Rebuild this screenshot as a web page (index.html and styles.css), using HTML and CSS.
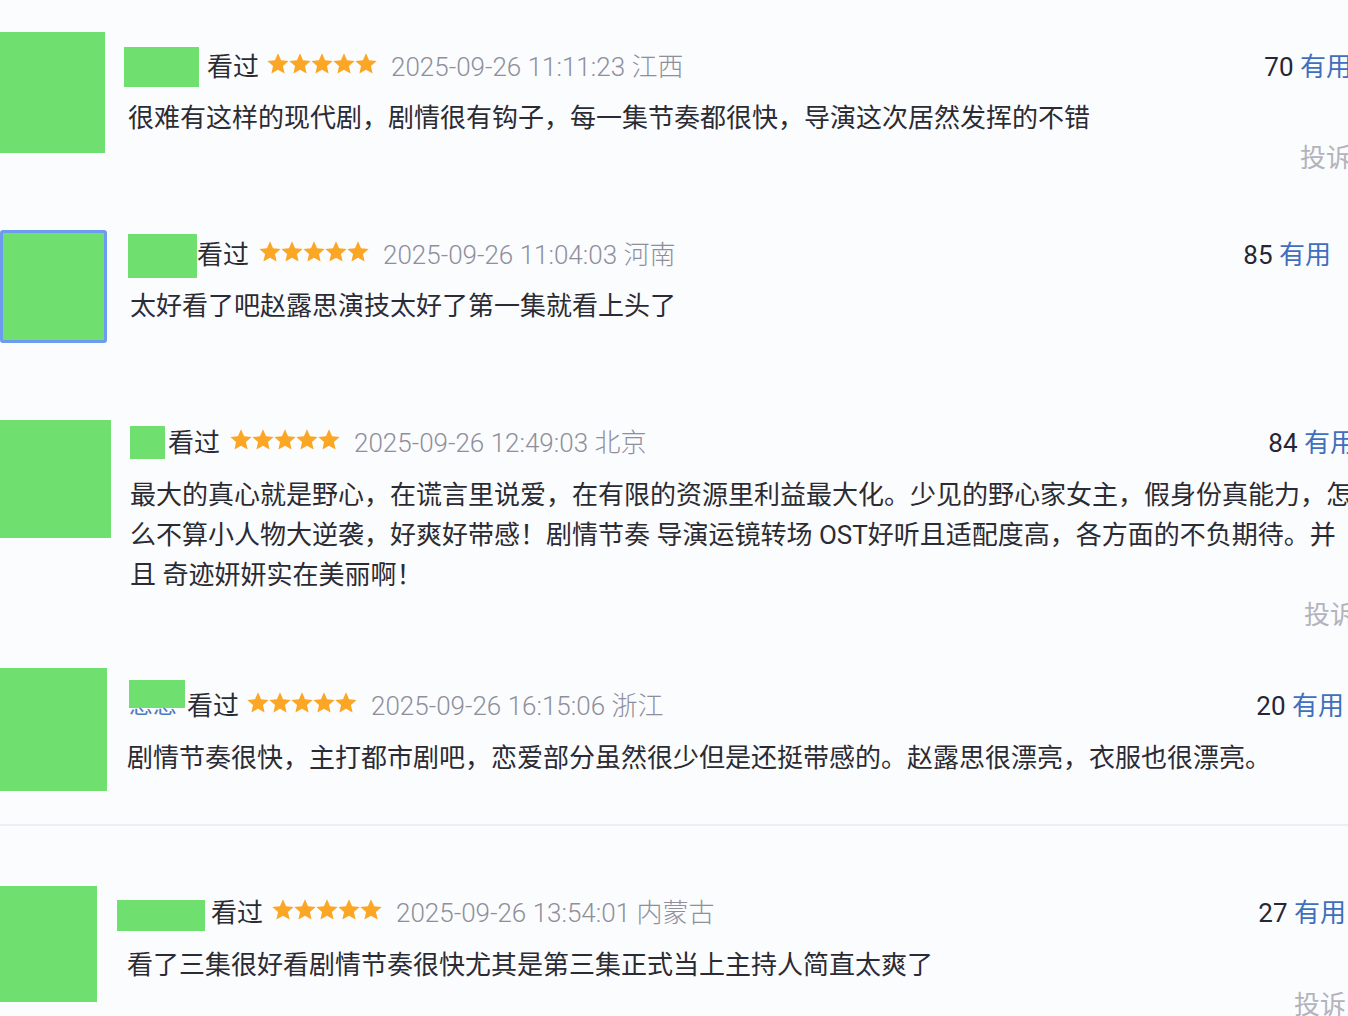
FILE: index.html
```html
<!doctype html>
<html lang="zh-CN">
  <head>
    <meta charset="UTF-8" />
    <meta name="viewport" content="width=device-width, initial-scale=1.0" />
    <title>短评</title>
    <link rel="stylesheet" href="styles.css">
  </head>
  <body>
    <svg class="sprite" aria-hidden="true">
      <defs>
        <symbol id="star" viewBox="0 0 22 22">
          <polygon points="11,0.3 14.06,7.29 21.65,8.04 15.95,13.11 17.59,20.56 11,16.7 4.41,20.56 6.05,13.11 0.35,8.04 7.94,7.29" />
        </symbol>
      </defs>
    </svg>

    <main class="review-list">
      <article class="review review--1">
        <div class="avatar"></div>
        <div class="review-body">
          <div class="review-head">
            <span class="user"></span>
            <span class="status">看过</span>
            <svg class="stars" viewBox="0 0 110 22"><use href="#star" x="0" width="22" height="22" /><use href="#star" x="22" width="22" height="22" /><use href="#star" x="44" width="22" height="22" /><use href="#star" x="66" width="22" height="22" /><use href="#star" x="88" width="22" height="22" /></svg>
            <span class="review-time">2025-09-26 11:11:23 江西</span>
            <span class="votes"><span class="vote-count">70</span> <a class="vote-link">有用</a></span>
          </div>
          <p class="review-text">很难有这样的现代剧，剧情很有钩子，每一集节奏都很快，导演这次居然发挥的不错</p>
          <div class="review-foot"><a class="report">投诉</a></div>
        </div>
      </article>

      <article class="review review--2">
        <div class="avatar avatar--focused"></div>
        <div class="review-body">
          <div class="review-head">
            <span class="user"></span>
            <span class="status">看过</span>
            <svg class="stars" viewBox="0 0 110 22"><use href="#star" x="0" width="22" height="22" /><use href="#star" x="22" width="22" height="22" /><use href="#star" x="44" width="22" height="22" /><use href="#star" x="66" width="22" height="22" /><use href="#star" x="88" width="22" height="22" /></svg>
            <span class="review-time">2025-09-26 11:04:03 河南</span>
            <span class="votes"><span class="vote-count">85</span> <a class="vote-link">有用</a></span>
          </div>
          <p class="review-text">太好看了吧赵露思演技太好了第一集就看上头了</p>
        </div>
      </article>

      <article class="review review--3">
        <div class="avatar"></div>
        <div class="review-body">
          <div class="review-head">
            <span class="user"></span>
            <span class="status">看过</span>
            <svg class="stars" viewBox="0 0 110 22"><use href="#star" x="0" width="22" height="22" /><use href="#star" x="22" width="22" height="22" /><use href="#star" x="44" width="22" height="22" /><use href="#star" x="66" width="22" height="22" /><use href="#star" x="88" width="22" height="22" /></svg>
            <span class="review-time">2025-09-26 12:49:03 北京</span>
            <span class="votes"><span class="vote-count">84</span> <a class="vote-link">有用</a></span>
          </div>
          <p class="review-text">最大的真心就是野心，在谎言里说爱，在有限的资源里利益最大化。少见的野心家女主，假身份真能力，怎么不算小人物大逆袭，好爽好带感！剧情节奏 导演运镜转场 OST好听且适配度高，各方面的不负期待。并且 奇迹妍妍实在美丽啊！</p>
          <div class="review-foot"><a class="report">投诉</a></div>
        </div>
      </article>

      <article class="review review--4">
        <div class="avatar"></div>
        <div class="review-body">
          <div class="review-head">
            <span class="user">感感</span>
            <span class="status">看过</span>
            <svg class="stars" viewBox="0 0 110 22"><use href="#star" x="0" width="22" height="22" /><use href="#star" x="22" width="22" height="22" /><use href="#star" x="44" width="22" height="22" /><use href="#star" x="66" width="22" height="22" /><use href="#star" x="88" width="22" height="22" /></svg>
            <span class="review-time">2025-09-26 16:15:06 浙江</span>
            <span class="votes"><span class="vote-count">20</span> <a class="vote-link">有用</a></span>
          </div>
          <p class="review-text">剧情节奏很快，主打都市剧吧，恋爱部分虽然很少但是还挺带感的。赵露思很漂亮，衣服也很漂亮。</p>
        </div>
      </article>

      <hr class="divider" />

      <article class="review review--5">
        <div class="avatar"></div>
        <div class="review-body">
          <div class="review-head">
            <span class="user"></span>
            <span class="status">看过</span>
            <svg class="stars" viewBox="0 0 110 22"><use href="#star" x="0" width="22" height="22" /><use href="#star" x="22" width="22" height="22" /><use href="#star" x="44" width="22" height="22" /><use href="#star" x="66" width="22" height="22" /><use href="#star" x="88" width="22" height="22" /></svg>
            <span class="review-time">2025-09-26 13:54:01 内蒙古</span>
            <span class="votes"><span class="vote-count">27</span> <a class="vote-link">有用</a></span>
          </div>
          <p class="review-text">看了三集很好看剧情节奏很快尤其是第三集正式当上主持人简直太爽了</p>
          <div class="review-foot"><a class="report">投诉</a></div>
        </div>
      </article>
    </main>
  </body>
</html>
```

FILE: styles.css
```css
* {
  margin: 0;
  padding: 0;
  box-sizing: border-box;
}

html {
  font-size: 26px;
}

body {
  font-family: Roboto, "Noto Sans CJK SC", sans-serif;
  background-color: #fbfcfe;
  color: #2b2b33;
  overflow: hidden;
  height: 1016px;
}

.sprite {
  position: absolute;
  width: 0;
  height: 0;
}

.review-list {
  width: 1356px;
}

.review {
  display: flex;
  align-items: flex-start;
  gap: var(--gap);
  margin-top: var(--top);
  padding-right: var(--pad-right);
}

.review--1 {
  --top: 32px; --gap: 23px; --pad-right: 4px;
  --av-w: 105px; --av-h: 121px; --body-top: 12px; --text-top: 14px;
  --mask-w: 75px; --mask-h: 40px; --mask-top: 3px; --mask-x: -4px; --mask-gap: 8px; --stars-gap: 8px;
}

.review--2 {
  --top: 52px; --gap: 23px; --pad-right: 25px;
  --av-w: 107px; --av-h: 113px; --body-top: 2px; --text-top: 14px;
  --mask-w: 69px; --mask-h: 44px; --mask-top: 2px; --mask-x: -2px; --mask-gap: 0px; --stars-gap: 10px;
}

.review--3 {
  --top: 77px; --gap: 19px; --pad-right: 0px;
  --av-w: 111px; --av-h: 118px; --body-top: 0px; --text-top: 15px;
  --mask-w: 35px; --mask-h: 33px; --mask-top: 6px; --mask-x: 0px; --mask-gap: 3px; --stars-gap: 10px;
}

.review--4 {
  --top: 33px; --gap: 20px; --pad-right: 12px;
  --av-w: 107px; --av-h: 123px; --body-top: 15px; --text-top: 15px;
  --mask-w: 56px; --mask-h: 28px; --mask-top: -3px; --mask-x: 2px; --mask-gap: 2px; --stars-gap: 8px;
}

.review--5 {
  --top: 60px; --gap: 30px; --pad-right: 10px;
  --av-w: 97px; --av-h: 116px; --body-top: 4px; --text-top: 15px;
  --mask-w: 88px; --mask-h: 31px; --mask-top: 10px; --mask-x: -10px; --mask-gap: 6px; --stars-gap: 9px;
}

.avatar {
  flex: none;
  width: var(--av-w);
  height: var(--av-h);
  background-color: #6fdf70;
}

.avatar--focused {
  border: 3px solid #6d9cee;
  border-radius: 3px;
}

.review-body {
  flex: 1;
  min-width: 0;
  padding-top: var(--body-top);
}

.review-head {
  display: flex;
  align-items: center;
  height: 40px;
  white-space: nowrap;
}

.user {
  position: relative;
  flex: none;
  width: var(--mask-w);
  height: 40px;
  margin-left: var(--mask-x);
  margin-right: var(--mask-gap);
  font-size: 24px;
  line-height: 44px;
  color: #4a78c2;
}

.user::after {
  content: "";
  position: absolute;
  left: 0;
  top: var(--mask-top);
  width: 100%;
  height: var(--mask-h);
  background-color: #6fdf70;
}

.status {
  color: #2b2b33;
}

.stars {
  flex: none;
  width: 110px;
  height: 22px;
  margin-left: var(--stars-gap);
  margin-right: 14px;
  fill: #fba624;
}

.review-time {
  color: #8f8f9c;
  font-weight: 300;
}

.votes {
  margin-left: auto;
}

.vote-count {
  color: #262636;
}

.vote-link {
  color: #3f6fbd;
}

.review-text {
  margin-top: var(--text-top);
  line-height: 40px;
}

.review-foot {
  display: flex;
  justify-content: flex-end;
  height: 40px;
  line-height: 40px;
}

.report {
  color: #b3b3bc;
}

.divider {
  margin-top: 33px;
  border: none;
  height: 2px;
  background-color: #eceef2;
}
```
